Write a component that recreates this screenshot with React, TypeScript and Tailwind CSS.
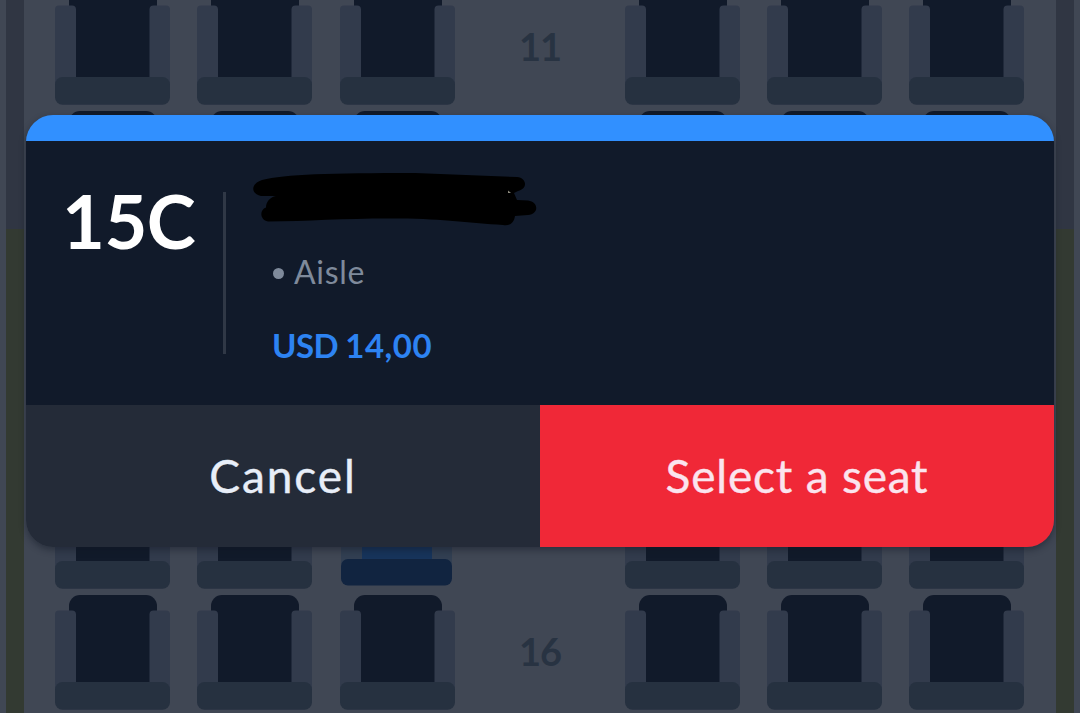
const ROWS = [11, 12, 13, 14, 15, 16];

function Seat() {
  return (
    <svg className="block h-[115px] w-[115px] shrink-0" viewBox="0 0 115 115">
      <path d="M14 30V11A11 11 0 0 1 25 0H91A11 11 0 0 1 102 11V30Z" fill="#111a2a" />
      <path d="M20 14H96V90H20Z" fill="#111a2a" />
      <path d="M0 95V19.5A4 4 0 0 1 4 15.500H17A4 4 0 0 1 21 19.500V95Z" fill="#323b4c" />
      <path d="M94.500 95V19.500A4 4 0 0 1 98.500 15.500H111A4 4 0 0 1 115 19.500V95Z" fill="#323b4c" />
      <rect x="0" y="87" width="115" height="27.700" rx="7.500" fill="#263140" />
    </svg>
  );
}

function ActiveSeat() {
  return (
    <svg className="block h-[115px] w-[115px] shrink-0" viewBox="0 0 115 115">
      <rect x="15" y="2" width="85" height="40" rx="11" fill="#17345b" />
      <rect x="20" y="14" width="74" height="76" fill="#17345b" />
      <rect x="1" y="17" width="21" height="76" rx="4" fill="#323f52" />
      <rect x="92" y="17" width="20" height="76" rx="4" fill="#323f52" />
      <rect x="1" y="85" width="111" height="26.500" rx="7" fill="#112440" />
    </svg>
  );
}

function SeatRow({ row }: { row: number }) {
  return (
    <div className="flex h-[121px] shrink-0 items-start">
      <div className="flex w-[400px]">
        <Seat />
        <div className="mr-7 ml-[27px]">
          <Seat />
        </div>
        {row === 15 ? <ActiveSeat /> : <Seat />}
      </div>
      <div className="w-[170px] pt-[37px] text-center text-[38px] leading-none font-bold tracking-[-1px] text-[#283342]">
        {row}
      </div>
      <div className="flex w-[399px] justify-between">
        <Seat />
        <Seat />
        <Seat />
      </div>
    </div>
  );
}

function Wall() {
  return (
    <div className="flex w-[18px] shrink-0 flex-col">
      <div className="h-[229px] bg-[#303643]" />
      <div className="flex-1 bg-[#333a32]" />
    </div>
  );
}

function Scribble() {
  return (
    <svg className="block h-[54px] w-[286px]" viewBox="252 172 286 54" fill="#000">
      <path d="M262 180C285 174 330 173 415 173L517 177C527 178 528 189 518 191L514 193L517 200L528 200.500C539 202 539 214 528 215L515 216C514 223 510 226 503 225C470 223 445 219 400 218.500C350 218 310 221 268 221.500C260 220 259 210 266 207.500C266 202 270 197 276 196L261 196C251 194 250 184 262 180Z" />
      <path d="M508 190.500L511 193H508Z" fill="#8f8d80" />
    </svg>
  );
}

function SeatDialog() {
  return (
    <div className="absolute top-[115px] left-[26px] flex h-[432px] w-[1028px] flex-col overflow-hidden rounded-[27px] shadow-[0_3px_7px_rgba(15,23,36,0.45)]">
      <div className="h-[26px] shrink-0 bg-[#3190ff]" />
      <div className="flex h-[264px] shrink-0 bg-[#111a2a]">
        <div className="w-[197px] pt-[43px] pl-9 text-[74px] leading-none font-bold tracking-[-0.5px] text-white">15C</div>
        <div className="mt-[51px] h-[162px] w-[3px] bg-[#303846]" />
        <div className="flex flex-col pt-[31px] pl-[26px]">
          <Scribble />
          <div className="mt-[30px] flex items-center pl-[21px] text-[32px] leading-none text-[#7f8a9b]">
            <span className="mt-0.5 mr-[10px] size-[11px] rounded-full bg-[#7f8a9b]" />
            <span className="tracking-[0.7px]">Aisle</span>
          </div>
          <div className="mt-[41px] pl-5 text-[33px] leading-none font-bold whitespace-nowrap text-[#2d83f2]">
            <span className="tracking-[-0.6px]">USD </span>
            <span className="tracking-[0.5px]">14,00</span>
          </div>
        </div>
      </div>
      <div className="grid flex-1 grid-cols-2 text-[46px] leading-none text-[#e8eef8]">
        <button className="flex items-start justify-center bg-[#242b38] pt-12 tracking-[1.9px] [-webkit-text-stroke:0.4px_#e8eef8]">
          Cancel
        </button>
        <button className="flex items-start justify-center bg-[#f02837] pt-12 tracking-[0.8px] text-[#fbe4ee] [-webkit-text-stroke:0.4px_#fbe4ee]">
          Select a seat
        </button>
      </div>
    </div>
  );
}

export default function App() {
  return (
    <div className="relative flex h-[713px] w-[1080px] overflow-hidden bg-[#404754] px-1.5 font-['Lato',sans-serif]">
      <Wall />
      <div className="-mt-[10px] flex flex-1 flex-col pl-[31px]">
        {ROWS.map((row) => (
          <SeatRow key={row} row={row} />
        ))}
      </div>
      <Wall />
      <SeatDialog />
    </div>
  );
}
